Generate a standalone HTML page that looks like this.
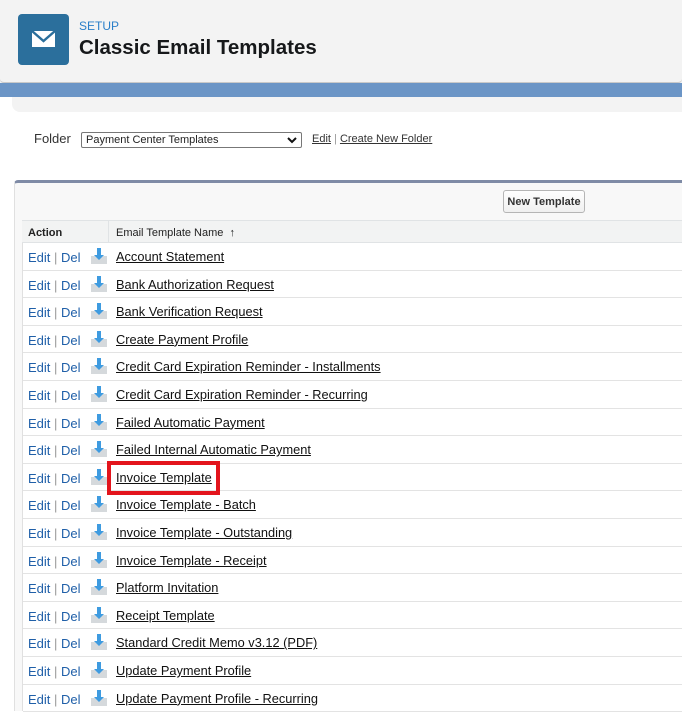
<!DOCTYPE html>
<html><head><meta charset="utf-8"><style>
*{margin:0;padding:0;box-sizing:border-box}
body{width:682px;height:711px;overflow:hidden;background:#fff;font-family:"Liberation Sans",Arial,sans-serif;position:relative}
.hdr{position:absolute;left:0;top:0;width:682px;height:83px;background:#f3f3f3;border-bottom:1px solid #c9c9c9;border-radius:0 0 4px 4px;box-shadow:0 1px 2px rgba(0,0,0,.15)}
.band{position:absolute;left:0;top:83px;width:682px;height:14px;background:#6b95c6}
.ico{position:absolute;left:18px;top:14px;width:51px;height:51px;background:#2b6f9c;border-radius:4px}
.setup{position:absolute;left:79px;top:19px;font-size:12px;color:#2a7fc9}
.title{position:absolute;left:79px;top:36px;font-size:20.5px;font-weight:bold;color:#16181a}
.card{position:absolute;left:0;top:97px;width:682px;height:15px;background:#fff}
.card2{position:absolute;left:12px;top:97px;width:670px;height:15px;background:#f3f3f3;border-radius:0 0 0 8px}
.folder{position:absolute;left:34px;top:131px;font-size:13px;color:#333}
.sel{position:absolute;left:81px;top:132px;width:221px;height:16px;border:1px solid #777;border-radius:2px;font-size:11px;padding:1px 0 0 4px;color:#222}
.sel svg{position:absolute;right:4px;top:4px}
.flinks{position:absolute;left:312px;top:133px;font-size:11px;color:#333}
.flinks a{color:#333;text-decoration:underline}
.panel{position:absolute;left:14px;top:180px;width:668px;height:531px;background:#f8f8f8;border-top:3px solid #7f8ba6;border-left:1px solid #e0e0e0;border-radius:4px 0 0 0}
.btn{position:absolute;left:503px;top:190px;width:82px;height:23px;border:1px solid #b5b5b5;border-radius:3px;background:linear-gradient(#fefefe,#f0f0f0);font-size:11px;font-weight:bold;color:#333;text-align:center;line-height:21px;padding-top:1px}
.tbl{position:absolute;left:22px;top:220px;width:660px;height:491px;background:#fff;border-left:1px solid #e0e0e0}
.th{position:absolute;left:22px;top:220px;width:660px;height:23px;background:#f2f3f3;border-top:1px solid #e0e3e5;border-bottom:1px solid #e0e3e5;font-size:11px;font-weight:bold;color:#222}
.th span{position:absolute;top:6px}
.row{position:absolute;left:23px;width:659px;height:27.6px;border-bottom:1px solid #e3e3e3;font-size:13px}
.row .ed{position:absolute;left:5px;top:7px;color:#1f5fa8}
.row .ed i{font-style:normal;color:#999}
.row svg{position:absolute;left:67px;top:4px}
.row .nm{position:absolute;left:93px;top:6px;color:#111;text-decoration:underline;font-size:12.8px}
.red{position:absolute;left:107px;top:461px;width:113px;height:34px;border:4px solid #e3141c}
</style></head><body>
<div class="hdr"></div>
<div class="band"></div>
<div class="ico"><svg width="51" height="51" viewBox="0 0 51 51"><path d="M14 17h23v16H14z" fill="#fff"/><path d="M14 17l11.5 10L37 17" fill="none" stroke="#2b6f9c" stroke-width="2.4"/></svg></div>
<div class="setup">SETUP</div>
<div class="title">Classic Email Templates</div>
<div class="card"></div><div class="card2"></div>
<div class="folder">Folder</div>
<div class="sel">Payment Center Templates<svg width="10" height="7" viewBox="0 0 10 7"><path d="M1 1l4 4 4-4" fill="none" stroke="#111" stroke-width="2"/></svg></div>
<div class="flinks"><a>Edit</a> <span style="color:#999">|</span> <a>Create New Folder</a></div>
<div class="panel"></div>
<div class="btn">New Template</div>
<div class="tbl"></div>
<div class="th"><span style="left:6px">Action</span><span style="left:86px;border-left:1px solid #e0e3e5;height:23px;top:-1px"></span><span style="left:94px;font-weight:normal;color:#222">Email Template Name &nbsp;↑</span></div>
<div class="row" style="top:243px"><span class="ed">Edit <i>|</i> Del</span><svg width="18" height="18" viewBox="0 0 18 18"><path d="M1 9h16v8H1z" fill="#d5d9dc"/><path d="M7 1h4v7h3l-5 5-5-5h3z" fill="#3e9be0"/></svg><span class="nm">Account Statement</span></div>
<div class="row" style="top:270.6px"><span class="ed">Edit <i>|</i> Del</span><svg width="18" height="18" viewBox="0 0 18 18"><path d="M1 9h16v8H1z" fill="#d5d9dc"/><path d="M7 1h4v7h3l-5 5-5-5h3z" fill="#3e9be0"/></svg><span class="nm">Bank Authorization Request</span></div>
<div class="row" style="top:298.2px"><span class="ed">Edit <i>|</i> Del</span><svg width="18" height="18" viewBox="0 0 18 18"><path d="M1 9h16v8H1z" fill="#d5d9dc"/><path d="M7 1h4v7h3l-5 5-5-5h3z" fill="#3e9be0"/></svg><span class="nm">Bank Verification Request</span></div>
<div class="row" style="top:325.8px"><span class="ed">Edit <i>|</i> Del</span><svg width="18" height="18" viewBox="0 0 18 18"><path d="M1 9h16v8H1z" fill="#d5d9dc"/><path d="M7 1h4v7h3l-5 5-5-5h3z" fill="#3e9be0"/></svg><span class="nm">Create Payment Profile</span></div>
<div class="row" style="top:353.4px"><span class="ed">Edit <i>|</i> Del</span><svg width="18" height="18" viewBox="0 0 18 18"><path d="M1 9h16v8H1z" fill="#d5d9dc"/><path d="M7 1h4v7h3l-5 5-5-5h3z" fill="#3e9be0"/></svg><span class="nm">Credit Card Expiration Reminder - Installments</span></div>
<div class="row" style="top:381px"><span class="ed">Edit <i>|</i> Del</span><svg width="18" height="18" viewBox="0 0 18 18"><path d="M1 9h16v8H1z" fill="#d5d9dc"/><path d="M7 1h4v7h3l-5 5-5-5h3z" fill="#3e9be0"/></svg><span class="nm">Credit Card Expiration Reminder - Recurring</span></div>
<div class="row" style="top:408.6px"><span class="ed">Edit <i>|</i> Del</span><svg width="18" height="18" viewBox="0 0 18 18"><path d="M1 9h16v8H1z" fill="#d5d9dc"/><path d="M7 1h4v7h3l-5 5-5-5h3z" fill="#3e9be0"/></svg><span class="nm">Failed Automatic Payment</span></div>
<div class="row" style="top:436.2px"><span class="ed">Edit <i>|</i> Del</span><svg width="18" height="18" viewBox="0 0 18 18"><path d="M1 9h16v8H1z" fill="#d5d9dc"/><path d="M7 1h4v7h3l-5 5-5-5h3z" fill="#3e9be0"/></svg><span class="nm">Failed Internal Automatic Payment</span></div>
<div class="row" style="top:463.8px"><span class="ed">Edit <i>|</i> Del</span><svg width="18" height="18" viewBox="0 0 18 18"><path d="M1 9h16v8H1z" fill="#d5d9dc"/><path d="M7 1h4v7h3l-5 5-5-5h3z" fill="#3e9be0"/></svg><span class="nm">Invoice Template</span></div>
<div class="row" style="top:491.4px"><span class="ed">Edit <i>|</i> Del</span><svg width="18" height="18" viewBox="0 0 18 18"><path d="M1 9h16v8H1z" fill="#d5d9dc"/><path d="M7 1h4v7h3l-5 5-5-5h3z" fill="#3e9be0"/></svg><span class="nm">Invoice Template - Batch</span></div>
<div class="row" style="top:519px"><span class="ed">Edit <i>|</i> Del</span><svg width="18" height="18" viewBox="0 0 18 18"><path d="M1 9h16v8H1z" fill="#d5d9dc"/><path d="M7 1h4v7h3l-5 5-5-5h3z" fill="#3e9be0"/></svg><span class="nm">Invoice Template - Outstanding</span></div>
<div class="row" style="top:546.6px"><span class="ed">Edit <i>|</i> Del</span><svg width="18" height="18" viewBox="0 0 18 18"><path d="M1 9h16v8H1z" fill="#d5d9dc"/><path d="M7 1h4v7h3l-5 5-5-5h3z" fill="#3e9be0"/></svg><span class="nm">Invoice Template - Receipt</span></div>
<div class="row" style="top:574.2px"><span class="ed">Edit <i>|</i> Del</span><svg width="18" height="18" viewBox="0 0 18 18"><path d="M1 9h16v8H1z" fill="#d5d9dc"/><path d="M7 1h4v7h3l-5 5-5-5h3z" fill="#3e9be0"/></svg><span class="nm">Platform Invitation</span></div>
<div class="row" style="top:601.8px"><span class="ed">Edit <i>|</i> Del</span><svg width="18" height="18" viewBox="0 0 18 18"><path d="M1 9h16v8H1z" fill="#d5d9dc"/><path d="M7 1h4v7h3l-5 5-5-5h3z" fill="#3e9be0"/></svg><span class="nm">Receipt Template</span></div>
<div class="row" style="top:629.4px"><span class="ed">Edit <i>|</i> Del</span><svg width="18" height="18" viewBox="0 0 18 18"><path d="M1 9h16v8H1z" fill="#d5d9dc"/><path d="M7 1h4v7h3l-5 5-5-5h3z" fill="#3e9be0"/></svg><span class="nm">Standard Credit Memo v3.12 (PDF)</span></div>
<div class="row" style="top:657px"><span class="ed">Edit <i>|</i> Del</span><svg width="18" height="18" viewBox="0 0 18 18"><path d="M1 9h16v8H1z" fill="#d5d9dc"/><path d="M7 1h4v7h3l-5 5-5-5h3z" fill="#3e9be0"/></svg><span class="nm">Update Payment Profile</span></div>
<div class="row" style="top:684.6px"><span class="ed">Edit <i>|</i> Del</span><svg width="18" height="18" viewBox="0 0 18 18"><path d="M1 9h16v8H1z" fill="#d5d9dc"/><path d="M7 1h4v7h3l-5 5-5-5h3z" fill="#3e9be0"/></svg><span class="nm">Update Payment Profile - Recurring</span></div>
<div class="red"></div>
</body></html>
